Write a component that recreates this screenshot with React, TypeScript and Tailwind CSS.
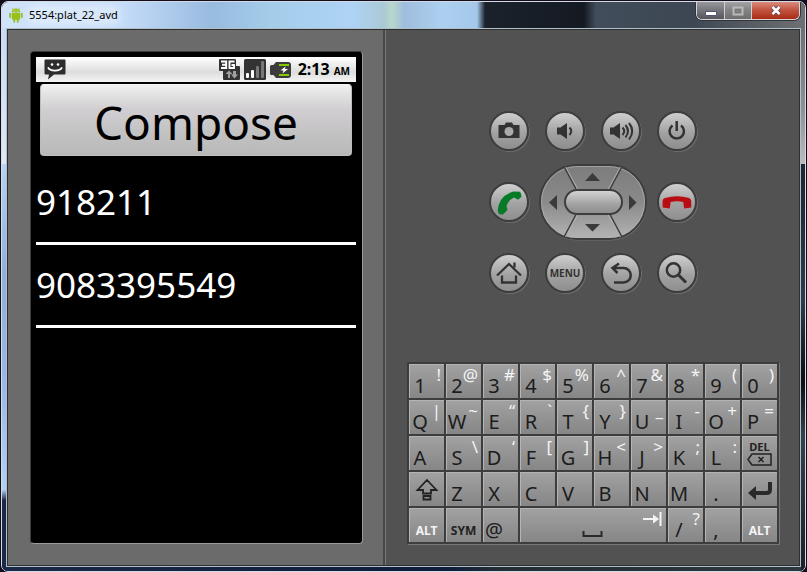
import type { ReactNode } from "react";

const INK = "#333333";

function AndroidLogo() {
  return (
    <svg width="14" height="16" viewBox="0 0 14 16" fill="#97bf1e" aria-hidden="true">
      <path d="M3.2 0.8 4.4 2.6M10.8 0.8 9.6 2.6" stroke="#97bf1e" strokeWidth="0.8" />
      <path d="M2.8 5.2a4.2 3.6 0 0 1 8.4 0z" />
      <circle cx="5.2" cy="3.8" r="0.6" fill="#fff" />
      <circle cx="8.8" cy="3.8" r="0.6" fill="#fff" />
      <path d="M2.8 5.8h8.4v6a.9.9 0 0 1-.9.9H3.7a.9.9 0 0 1-.9-.9z" />
      <rect x="0.2" y="5.8" width="1.9" height="5.2" rx="0.9" />
      <rect x="11.9" y="5.8" width="1.9" height="5.2" rx="0.9" />
      <rect x="4.3" y="11.5" width="1.9" height="4.2" rx="0.9" />
      <rect x="7.8" y="11.5" width="1.9" height="4.2" rx="0.9" />
    </svg>
  );
}

function TitleBar() {
  return (
    <header className="flex h-[26px] items-start justify-between pl-[7px]">
      <div className="flex h-full items-center gap-1.5">
        <AndroidLogo />
        <h1 className="rounded-full bg-white/30 text-[11px] leading-4 text-black shadow-[0_0_6px_3px_rgba(255,255,255,0.3)]">
          5554:plat_22_avd
        </h1>
      </div>
      <div className="mr-[5px] flex h-[18px] overflow-hidden rounded-b-md border border-t-0 border-[#d5d5d8] shadow-[0_0_0_1px_#33333a]">
        <button
          type="button"
          aria-label="Minimize"
          className="flex w-7 items-center justify-center border-r border-[#d0d0d4] bg-linear-to-b from-[#98989c] via-[#77797f] via-45% to-[#55565b]"
        >
          <svg width="12" height="12" viewBox="0 0 12 12">
            <rect x="0.5" y="6.5" width="11" height="4" rx="0.5" fill="#fff" stroke="#50546b" />
          </svg>
        </button>
        <button
          type="button"
          aria-label="Maximize"
          className="flex w-[27px] items-center justify-center border-r border-[#d0d0d4] bg-linear-to-b from-[#a3a3a5] via-[#858586] via-45% to-[#6d6d6e]"
        >
          <svg width="12" height="10" viewBox="0 0 12 10" fill="none">
            <rect x="1.5" y="1.5" width="9" height="7" stroke="#b9b9b9" strokeWidth="2" />
            <rect x="3.5" y="3.5" width="5" height="3" stroke="#777" />
          </svg>
        </button>
        <button
          type="button"
          aria-label="Close"
          className="flex w-[47px] items-center justify-center bg-linear-to-b from-[#d98b7c] via-[#c25541] via-45% to-[#a92a12]"
        >
          <svg width="12" height="11" viewBox="0 0 12 11" fill="none">
            <path d="M2.5 2 9.5 9M9.5 2l-7 7" stroke="#5a4650" strokeWidth="4.4" />
            <path d="M2.5 2 9.5 9M9.5 2l-7 7" stroke="#fff" strokeWidth="2.6" />
          </svg>
        </button>
      </div>
    </header>
  );
}

function MessageIcon() {
  return (
    <svg width="22" height="21" viewBox="0 0 22 21" aria-hidden="true">
      <path d="M1.5 0.5h19a1 1 0 0 1 1 1v13a1 1 0 0 1-1 1H10l-6 5 1-5H1.5a1 1 0 0 1-1-1v-13a1 1 0 0 1 1-1z" fill="#2d2d2d" />
      <circle cx="8" cy="5.5" r="1.3" fill="#fff" />
      <circle cx="14" cy="5.5" r="1.3" fill="#fff" />
      <path d="M4 8.3c2 4.400 12 4.400 14 0" fill="none" stroke="#fff" strokeWidth="1.8" />
    </svg>
  );
}

function NetworkIcon() {
  return (
    <svg width="21" height="21" viewBox="0 0 21 21" aria-label="3G">
      <path d="M1 0h15a1 1 0 0 1 1 1v6h3a1 1 0 0 1 1 1v12a1 1 0 0 1-1 1H5a1 1 0 0 1-1-1v-8H1a1 1 0 0 1-1-1V1a1 1 0 0 1 1-1z" fill="#333" />
      <path d="M2 2.500h5.200v6.500H2M3 5.700h4M15.500 2.500h-5v6.500h4.500V6h-2.500" fill="none" stroke="#fff" strokeWidth="1.900" />
      <path d="M9 19v-4H6.500L10 11.500l3.500 3.500H11v4z" fill="#a0a0a0" />
      <path d="M14 12v3.500H12L15.500 19.500 19 15.500H17V12z" fill="#a0a0a0" />
    </svg>
  );
}

function SignalIcon() {
  return (
    <svg width="22" height="21" viewBox="0 0 22 21" aria-hidden="true">
      <rect width="22" height="21" rx="1.5" fill="#333" />
      <rect x="2" y="14" width="3" height="5" rx="1" fill="#fff" />
      <rect x="7" y="11" width="3" height="8" rx="1" fill="#fff" />
      <rect x="12" y="7" width="3" height="12" rx="1" fill="#777" />
      <rect x="17" y="2" width="3" height="17" rx="1" fill="#777" />
    </svg>
  );
}

function BatteryIcon() {
  return (
    <svg width="21" height="16" viewBox="0 0 21 16" aria-hidden="true">
      <path d="M6 0h12a3 3 0 0 1 3 3v10a3 3 0 0 1-3 3H6l-2.500-3H1.500A1.500 1.500 0 0 1 0 11.500v-7A1.500 1.500 0 0 1 1.500 3h2z" fill="#3c3c3c" />
      <path d="M9 2h10v2H9zM9 12h10v2H9z" fill="#86c800" />
      <path d="M15.500 4.500 10.500 8.500h3L12.500 11.500l5.500-4.500H15z" fill="#fff" />
    </svg>
  );
}

function Phone() {
  return (
    <section className="rounded-[4px] border border-t-[#3c3c3c] border-r-[#9a9a9a] border-b-[#9a9a9a] border-l-[#3c3c3c] bg-black p-[5px]">
      <div className="h-[481px] w-[321px]">
        <div className="flex h-[25px] w-80 items-center bg-linear-to-b from-white via-[#dcdedc] via-60% to-[#f4f4f4] pr-1.5 pl-2">
          <MessageIcon />
          <div className="ml-auto flex items-center gap-1">
            <NetworkIcon />
            <SignalIcon />
            <BatteryIcon />
          </div>
          <p className="ml-[7px] flex items-baseline gap-1 font-bold text-black">
            <span className="text-[16px] leading-5">2:13</span>
            <span className="text-[10px] leading-5">AM</span>
          </p>
        </div>
        <button
          type="button"
          className="mx-1 mt-0.5 flex h-[72px] w-[312px] items-center justify-center rounded-[4px] border border-[#bdbdbd] border-t-[#f5f5f5] bg-linear-to-b from-[#f0f0f0] via-[#d0ced0] via-35% to-[#b8b8b8] pt-1 text-[46px] leading-none text-black"
        >
          Compose
        </button>
        <ul className="mt-1.5 w-80 text-[35px] leading-[80px] text-white">
          <li className="border-b-[3px] border-white">918211</li>
          <li className="border-b-[3px] border-white">9083395549</li>
        </ul>
      </div>
    </section>
  );
}

function RoundButton({ label, children }: { label: string; children: ReactNode }) {
  return (
    <button
      type="button"
      aria-label={label}
      className="flex size-10 items-center justify-center rounded-full border-2 border-[#3d3d3d] bg-linear-to-b from-[#cfcfcf] via-[#a2a2a2] via-55% to-[#8e8e8e] shadow-[1px_1px_0_#6e6e6e]"
    >
      {children}
    </button>
  );
}

function Glyph({ children }: { children: ReactNode }) {
  return (
    <svg width="40" height="40" viewBox="0 0 40 40" fill="none" className="shrink-0" aria-hidden="true">
      {children}
    </svg>
  );
}

function DirectionPad() {
  return (
    <svg width="110" height="78" viewBox="-2 -1 110 78" role="group" aria-label="Direction pad">
      <defs>
        <linearGradient id="pad" x1="0" y1="0" x2="0" y2="1">
          <stop offset="0" stopColor="#7c7c7c" />
          <stop offset="0.5" stopColor="#8a8a8a" />
          <stop offset="1" stopColor="#b4b4b4" />
        </linearGradient>
        <linearGradient id="select" x1="0" y1="0" x2="0" y2="1">
          <stop offset="0" stopColor="#d6d6d6" />
          <stop offset="0.6" stopColor="#a2a2a2" />
          <stop offset="1" stopColor="#8c8c8c" />
        </linearGradient>
      </defs>
      <rect x="1" y="1.500" width="106" height="75" rx="37" fill="#6e6e6e" />
      <rect x="0" y="1" width="106" height="74" rx="37" fill="url(#pad)" stroke="#3d3d3d" strokeWidth="2" />
      <rect x="1.500" y="2.500" width="103" height="71" rx="35.500" fill="none" stroke="#b0b0b0" strokeOpacity="0.700" />
      <path d="M25.500 3 37.500 25M80.500 3 68.500 25M37.500 51 25.500 73M68.500 51l12 22" stroke="#b0b0b0" strokeWidth="1.200" />
      <path d="M24 2.500 36 25M82 2.500 70 25M36 50.500 24 73M70 50.500l12 22.500" stroke="#3d3d3d" strokeWidth="1.500" />
      <rect x="25" y="26" width="57" height="24" rx="12" fill="url(#select)" stroke="#3d3d3d" strokeWidth="2" />
      <path d="M45 17h15L52.500 9zM45 60h15l-7.500 7.500zM17 31v15l-8-7.500zM89 31v15l7.500-7.500z" fill="#3a3a3a" />
    </svg>
  );
}

function Controls() {
  return (
    <section aria-label="Hardware controls" className="flex flex-col items-center gap-3">
      <div className="flex gap-4">
        <RoundButton label="Camera">
          <Glyph>
            <path d="M9.500 14h6l1.500-2.500h6l1.500 2.500h6v13h-21z" fill={INK} />
            <circle cx="20" cy="20.500" r="4.500" fill="#aaaaaa" />
          </Glyph>
        </RoundButton>
        <RoundButton label="Volume down">
          <Glyph>
            <path d="M12 16.500h3.500L22 12v16l-6.500-4.500H12z" fill={INK} />
            <path d="M24.500 16.500q3.500 3.500 0 7.500" stroke={INK} strokeWidth="2" />
          </Glyph>
        </RoundButton>
        <RoundButton label="Volume up">
          <Glyph>
            <path d="M9 16.500h3.500L19 12v16l-6.500-4.500H9z" fill={INK} />
            <path d="M21.500 16.500q3.500 3.500 0 7.500M24.500 14q5 6 0 12.500M28 12q6.500 8 0 16.500" stroke={INK} strokeWidth="2" />
          </Glyph>
        </RoundButton>
        <RoundButton label="Power">
          <Glyph>
            <path d="M15.500 14.500a7.200 7.200 0 1 0 8.500 0" stroke={INK} strokeWidth="2.500" />
            <path d="M19.700 10v10" stroke={INK} strokeWidth="2.500" />
          </Glyph>
        </RoundButton>
      </div>
      <div className="flex items-center gap-[9px]">
        <RoundButton label="Call">
          <Glyph>
            <path
              d="M24.500 9.500 31 9.700q1.500 2 1.300 5.300L29 17.700 25 15.500Q19.500 18 17.500 24l1 4-4.500 4.500-3 0Q9 31 8.700 28.500 10 13.500 24.500 9.500z"
              fill="#077a28"
            />
          </Glyph>
        </RoundButton>
        <DirectionPad />
        <RoundButton label="End call">
          <Glyph>
            <path
              d="M5.500 20Q5.500 16.500 8 16q12-3.500 24 0 2.500 1 2.200 4v5.500l-7 1-1-6.500q-6-1.500-12.500 0l-1 6.500-7-1z"
              fill="#b80d12"
            />
          </Glyph>
        </RoundButton>
      </div>
      <div className="flex gap-4">
        <RoundButton label="Home">
          <Glyph>
            <path d="M8 22.500 20 11l12 11.500M25.500 9.500v5M13 22.500V29.500h14V22.500" stroke={INK} strokeWidth="2.300" />
          </Glyph>
        </RoundButton>
        <RoundButton label="Menu">
          <span className="text-[10px] leading-4 font-bold text-[#333333]">MENU</span>
        </RoundButton>
        <RoundButton label="Back">
          <Glyph>
            <path d="M18 10.500 11.500 15l5 5M11.500 15H22.500a7.200 7.200 0 0 1 0 14.500H13" stroke={INK} strokeWidth="2.500" />
          </Glyph>
        </RoundButton>
        <RoundButton label="Search">
          <Glyph>
            <circle cx="16.500" cy="17" r="6.700" stroke={INK} strokeWidth="2.500" />
            <path d="m21.500 22 7.500 7.500" stroke={INK} strokeWidth="3" />
          </Glyph>
        </RoundButton>
      </div>
    </section>
  );
}

const KEY =
  "relative h-[34px] bg-linear-to-b from-[#a2a2a2] to-[#868686] shadow-[inset_1px_1px_0_#b4b4b4]";

function Key({ main, alt }: { main: string; alt?: string }) {
  return (
    <button type="button" className={KEY}>
      <span className="absolute bottom-0 left-0 w-[22px] text-center text-[20px] leading-6 text-[#1c1c1c]">
        {main}
      </span>
      {alt && (
        <span className="absolute top-0 right-[3px] text-[17px] leading-[22px] text-[#f4f4f4]">{alt}</span>
      )}
    </button>
  );
}

function ModKey({ label, light }: { label: string; light?: boolean }) {
  return (
    <button type="button" className={`${KEY} flex items-end justify-center pb-[3px]`}>
      <span className={`text-[12px] leading-4 font-bold ${light ? "text-[#f4f4f4]" : "text-[#222222]"}`}>
        {label}
      </span>
    </button>
  );
}

const ROW_1 = [["1", "!"], ["2", "@"], ["3", "#"], ["4", "$"], ["5", "%"], ["6", "^"], ["7", "&"], ["8", "*"], ["9", "("], ["0", ")"]];
const ROW_2 = [["Q", "|"], ["W", "~"], ["E", "“"], ["R", "`"], ["T", "{"], ["Y", "}"], ["U", "_"], ["I", "-"], ["O", "+"], ["P", "="]];
const ROW_3 = [["A", ""], ["S", "\\"], ["D", "‘"], ["F", "["], ["G", "]"], ["H", "<"], ["J", ">"], ["K", ";"], ["L", ":"]];
const ROW_4 = ["Z", "X", "C", "V", "B", "N", "M", "."];

function Keyboard() {
  return (
    <section
      aria-label="Keyboard"
      className="grid w-[372px] grid-cols-10 gap-0.5 border-2 border-[#3d3d3d] bg-[#3d3d3d] shadow-[1px_1px_0_#777777]"
    >
      {[...ROW_1, ...ROW_2, ...ROW_3].map(([main, alt]) => (
        <Key key={main} main={main} alt={alt} />
      ))}
      <button type="button" aria-label="Delete" className={`${KEY} flex flex-col items-center justify-center`}>
        <span className="text-[11px] leading-3 font-bold text-[#222222]">DEL</span>
        <svg width="25" height="13" viewBox="0 0 25 13" fill="none" stroke="#222222" strokeWidth="1.500">
          <path d="M1 6.500 5 1h19v11H5zM11.500 4l5 5M16.500 4l-5 5" />
        </svg>
      </button>
      <button type="button" aria-label="Shift" className={`${KEY} flex items-center justify-center`}>
        <svg width="24" height="23" viewBox="0 0 24 23" fill="none" stroke="#222222" strokeWidth="1.800">
          <path d="M12 2 21.500 12H16v3.500H8V12H2.500zM8.500 18h7v3.500h-7z" />
        </svg>
      </button>
      {ROW_4.map((main) => (
        <Key key={main} main={main} />
      ))}
      <button type="button" aria-label="Enter" className={`${KEY} flex items-center justify-center pt-1`}>
        <svg width="26" height="20" viewBox="0 0 26 20" fill="none">
          <path d="M23 1v7.500q0 3.500-3.500 3.500H8" stroke="#2a2a2a" strokeWidth="4" />
          <path d="M1 12 9 5v14z" fill="#2a2a2a" />
        </svg>
      </button>
      <ModKey label="ALT" light />
      <ModKey label="SYM" />
      <Key main="@" />
      <button type="button" aria-label="Space" className={`${KEY} col-span-4`}>
        <svg width="22" height="7" viewBox="0 0 22 7" fill="none" className="absolute bottom-1 left-[62px]">
          <path d="M1.500 0v5h18V0" stroke="#2a2a2a" strokeWidth="2" />
        </svg>
        <svg width="20" height="14" viewBox="0 0 20 14" fill="none" className="absolute top-1 right-1">
          <path d="M1 7h14M18.500 0v14" stroke="#f4f4f4" strokeWidth="2" />
          <path d="M11 2.500l6 4.500-6 4.500z" fill="#f4f4f4" />
        </svg>
      </button>
      <Key main="/" alt="?" />
      <Key main="," />
      <ModKey label="ALT" light />
    </section>
  );
}

const TITLE_GLASS =
  "bg-[linear-gradient(to_right,#cfe3fa_0px,#c5dcf8_120px,#98bbe0_210px,#a4cdea_270px,#aed3f5_350px,#abc9d6_382px,#b9d8cc_390px,#9fbddc_402px,#acd0f0_440px,#a5c8ea_475px,#1b222c_483px,#151a22_582px,#424d5b_594px,#3d4753_690px,#6e7072_100%)] bg-[length:100%_27px] bg-no-repeat";

const FRAME_GLASS =
  "bg-[linear-gradient(to_bottom,#c5dcf8_0%,#e0e8f4_25%,#b4d4f8_25%,#8fb0d8_45%,#98b8ea_65%,#b0d2f6_85%,#1c2848_87%,#1c2848_100%),linear-gradient(to_bottom,#6e7072_0%,#8a929a_15%,#bcbcbc_25%,#1c2632_25%,#2c3a4a_50%,#0a0e14_65%,#33404e_75%,#1a2028_100%),linear-gradient(to_right,#1c2848_0%,#0f1c3c_55%,#222e36_62%,#2b383f_100%)] bg-[length:4px_100%,4px_100%,100%_100%] bg-[position:left,right,left] bg-no-repeat";

export default function App() {
  return (
    <div className="flex min-h-screen bg-[#120c1c] p-px font-['Noto_Sans','Open_Sans',sans-serif]">
      <main className="flex flex-1 flex-col overflow-hidden rounded-[7px] border border-[#d5dbe3] bg-[#1c2848]">
        <div className={`flex flex-1 flex-col ${TITLE_GLASS}`}>
          <TitleBar />
          <div className={`flex flex-1 px-1 pb-1 ${FRAME_GLASS}`}>
            <div className="flex flex-1 border border-[#b4bfc4]">
              <div className="flex flex-1 border border-[#2c3034] bg-[#525252]">
                <div className="border-r-2 border-[#474747] bg-[#6b6b6b] py-[21px] pr-5 pl-[22px]">
                  <Phone />
                </div>
                <div className="flex flex-1 flex-col items-center border-l border-[#777777] pt-[81px] pl-px">
                  <Controls />
                  <div className="mt-[69px]">
                    <Keyboard />
                  </div>
                </div>
              </div>
            </div>
          </div>
        </div>
      </main>
    </div>
  );
}
